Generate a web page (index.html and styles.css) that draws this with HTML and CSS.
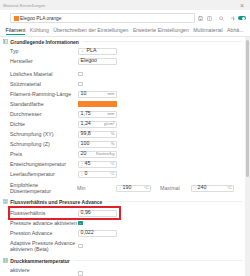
FILE: index.html
```html
<!DOCTYPE html>
<html lang="de">
<head>
    <meta charset="UTF-8">
    <meta name="viewport" content="width=device-width, initial-scale=1.0">
    <title>Material-Einstellungen</title>
    <link rel="stylesheet" href="styles.css">
</head>
<body>
    <div class="window">
        <div class="titlebar">
            <span class="title">Material-Einstellungen</span>
            <span class="close">×</span>
        </div>

        <div class="preset-bar">
            <div class="preset-select">
                <span class="swatch"></span>
                <span>Elegoo PLA orange</span>
            </div>
            <div class="preset-tools">
                <svg class="tool" viewBox="0 0 10 10"><rect x="1" y="1" width="8" height="8" rx="1" fill="none" stroke="#9a9a9a" stroke-width="1"/><rect x="3" y="1" width="4" height="3" fill="none" stroke="#9a9a9a" stroke-width="0.8"/><rect x="3" y="6" width="4" height="2" fill="#9a9a9a"/></svg>
                <svg class="tool" viewBox="0 0 10 10"><rect x="1" y="1" width="8" height="8" rx="1" fill="none" stroke="#9a9a9a" stroke-width="1"/><line x1="5" y1="1" x2="5" y2="9" stroke="#9a9a9a" stroke-width="0.8"/><line x1="2.5" y1="4" x2="4" y2="4" stroke="#9a9a9a" stroke-width="0.7"/><line x1="6" y1="6" x2="7.5" y2="6" stroke="#9a9a9a" stroke-width="0.7"/></svg>
                <svg class="tool search" viewBox="0 0 10 10"><circle cx="4.2" cy="4.2" r="2.9" fill="none" stroke="#8a8a8a" stroke-width="1"/><line x1="6.3" y1="6.3" x2="9" y2="9" stroke="#8a8a8a" stroke-width="1.1"/></svg>
                <svg class="tool branch" viewBox="0 0 10 10"><line x1="5" y1="1" x2="5" y2="9" stroke="#6fa89c" stroke-width="1.1"/><line x1="1.5" y1="4" x2="5" y2="4" stroke="#6fa89c" stroke-width="1.1"/><line x1="5" y1="6" x2="8.5" y2="6" stroke="#6fa89c" stroke-width="1.1"/><circle cx="1.8" cy="4" r="1" fill="#6fa89c"/></svg>
                <span class="toggle"><span class="knob"></span></span>
            </div>
        </div>

        <div class="tabs">
            <span class="tab active">Filament</span>
            <span class="tab">Kühlung</span>
            <span class="tab">Überschreiben der Einstellungen</span>
            <span class="tab">Erweiterte Einstellungen</span>
            <span class="tab">Multimaterial</span>
            <span class="tab">Abhä...</span>
        </div>

        <div class="content">
            <div class="page">
                <div class="section-head">
                    <svg class="sec-icon" viewBox="0 0 6 6"><rect x="0.4" y="0.4" width="5.2" height="5.2" fill="#dcefea" stroke="#86b9ae" stroke-width="0.7"/><rect x="1.4" y="1.4" width="1.2" height="3.2" fill="#86b9ae"/></svg>
                    <span>Grundlegende Informationen</span>
                </div>
                <div class="row">
                    <span class="label">Typ</span>
                    <span class="field">
                        <svg class="chevron" viewBox="0 0 6 4"><polyline points="1,1 3,3 5,1" fill="none" stroke="#999" stroke-width="0.8"/></svg>
                        <span class="value">PLA</span>
                    </span>
                </div>
                <div class="row">
                    <span class="label">Hersteller</span>
                    <span class="field"><span class="value">Elegoo</span></span>
                </div>
                <div class="row gap-top">
                    <span class="label">Lösliches Material</span>
                    <span class="check"></span>
                </div>
                <div class="row">
                    <span class="label">Stützmaterial</span>
                    <span class="check"></span>
                </div>
                <div class="row">
                    <span class="label">Filament-Ramming-Länge</span>
                    <span class="field"><span class="value">10</span><span class="unit">mm</span></span>
                </div>
                <div class="row">
                    <span class="label">Standardfarbe</span>
                    <span class="color-field"></span>
                </div>
                <div class="row">
                    <span class="label">Durchmesser</span>
                    <span class="field"><span class="value">1,75</span><span class="unit">mm</span></span>
                </div>
                <div class="row">
                    <span class="label">Dichte</span>
                    <span class="field"><span class="value">1,24</span><span class="unit">g/cm³</span></span>
                </div>
                <div class="row">
                    <span class="label">Schrumpfung (XY)</span>
                    <span class="field"><span class="value">99,8</span><span class="unit">%</span></span>
                </div>
                <div class="row">
                    <span class="label">Schrumpfung (Z)</span>
                    <span class="field"><span class="value">100</span><span class="unit">%</span></span>
                </div>
                <div class="row">
                    <span class="label">Preis</span>
                    <span class="field"><span class="value">20</span><span class="unit">Kosten/kg</span></span>
                </div>
                <div class="row">
                    <span class="label">Erweichungstemperatur</span>
                    <span class="field">
                        <svg class="spin" viewBox="0 0 4 8"><polyline points="0.8,3 2,1.8 3.2,3" fill="none" stroke="#aaa" stroke-width="0.6"/><polyline points="0.8,5 2,6.2 3.2,5" fill="none" stroke="#aaa" stroke-width="0.6"/></svg>
                        <span class="value">45</span><span class="unit">°C</span>
                    </span>
                </div>
                <div class="row">
                    <span class="label">Leerlauftemperatur</span>
                    <span class="field">
                        <svg class="spin" viewBox="0 0 4 8"><polyline points="0.8,3 2,1.8 3.2,3" fill="none" stroke="#aaa" stroke-width="0.6"/><polyline points="0.8,5 2,6.2 3.2,5" fill="none" stroke="#aaa" stroke-width="0.6"/></svg>
                        <span class="value">0</span><span class="unit">°C</span>
                    </span>
                </div>
                <div class="row two-line">
                    <span class="label">Empfohlene<br>Düsentemperatur</span>
                    <span class="range-label">Min</span>
                    <span class="field min">
                        <svg class="spin" viewBox="0 0 4 8"><polyline points="0.8,3 2,1.8 3.2,3" fill="none" stroke="#aaa" stroke-width="0.6"/><polyline points="0.8,5 2,6.2 3.2,5" fill="none" stroke="#aaa" stroke-width="0.6"/></svg>
                        <span class="value">190</span><span class="unit">°C</span>
                    </span>
                    <span class="range-label max-label">Maximal</span>
                    <span class="field max">
                        <svg class="spin" viewBox="0 0 4 8"><polyline points="0.8,3 2,1.8 3.2,3" fill="none" stroke="#aaa" stroke-width="0.6"/><polyline points="0.8,5 2,6.2 3.2,5" fill="none" stroke="#aaa" stroke-width="0.6"/></svg>
                        <span class="value">240</span><span class="unit">°C</span>
                    </span>
                </div>

                <div class="section-head">
                    <svg class="sec-icon" viewBox="0 0 6 6"><rect x="0.4" y="0.4" width="5.2" height="5.2" fill="#d6eef0" stroke="#8cc4c8" stroke-width="0.7"/><rect x="1.4" y="1.4" width="3.2" height="1.2" fill="#8cc4c8"/><rect x="1.4" y="3.4" width="3.2" height="1.2" fill="#8cc4c8"/></svg>
                    <span>Flussverhältnis und Pressure Advance</span>
                </div>
                <div class="row highlight">
                    <span class="label">Flussverhältnis</span>
                    <span class="field"><span class="value">0,96</span></span>
                </div>
                <div class="row">
                    <span class="label">Pressure advance aktivieren</span>
                    <span class="check on">
                        <svg viewBox="0 0 6 6"><polyline points="1.2,3 2.5,4.3 4.8,1.7" fill="none" stroke="#fff" stroke-width="0.9"/></svg>
                    </span>
                </div>
                <div class="row">
                    <span class="label">Pression Advance</span>
                    <span class="field"><span class="value">0,022</span></span>
                </div>
                <div class="row two-line short">
                    <span class="label">Adaptive Pressure Advance<br>aktivieren (Beta)</span>
                    <span class="check"></span>
                </div>

                <div class="section-head gap-top-small">
                    <svg class="sec-icon" viewBox="0 0 6 6"><rect x="0.4" y="0.4" width="5.2" height="5.2" fill="#dcefea" stroke="#86b9ae" stroke-width="0.7"/><rect x="1.4" y="1.4" width="1.2" height="3.2" fill="#86b9ae"/><rect x="3.4" y="1.4" width="1.2" height="3.2" fill="#86b9ae"/></svg>
                    <span>Druckkammertemperatur</span>
                </div>
                <div class="row last">
                    <span class="label">aktiviere</span>
                    <span class="check low"></span>
                </div>
            </div>
            <div class="scrollbar"><div class="thumb"></div></div>
        </div>
    </div>
</body>
</html>
```

FILE: styles.css
```css
html, body {
    margin: 0;
    padding: 0;
    height: 276px;
    overflow: hidden;
    background-color: #ffffff;
}
body {
    font-family: "Liberation Sans", Arial, sans-serif;
    color: #333333;
}
.window {
    width: 250px;
    height: 276px;
    display: flex;
    flex-direction: column;
}

/* title bar */
.titlebar {
    height: 10px;
    background-color: #f1f1f1;
    display: flex;
    align-items: center;
    justify-content: space-between;
    padding: 0 6px 0 3px;
    flex: none;
}
.title {
    font-size: 4.3px;
    color: #9c9c9c;
}
.close {
    font-size: 7px;
    line-height: 1;
    color: #8c8c8c;
}

/* preset row */
.preset-bar {
    height: 16px;
    display: flex;
    align-items: flex-start;
    padding: 3px 4px 0 10px;
    box-sizing: border-box;
    flex: none;
}
.preset-select {
    width: 185px;
    height: 10px;
    border: 1px solid #dedede;
    border-radius: 1px;
    box-sizing: border-box;
    display: flex;
    align-items: center;
    gap: 1.6px;
    padding-left: 2.5px;
    font-size: 4.8px;
    color: #333;
}
.swatch {
    width: 5px;
    height: 5px;
    background-color: #f5842a;
}
.preset-tools {
    display: flex;
    align-items: center;
    height: 10px;
    margin-left: 2.5px;
}
.tool {
    width: 5px;
    height: 5px;
    margin-right: 4px;
}
.tool.search {
    margin-left: 3px;
    margin-right: 7px;
}
.tool.branch {
    margin-right: 2.5px;
}
.toggle {
    width: 8px;
    height: 4.6px;
    border-radius: 3px;
    background-color: #0f9886;
    position: relative;
}
.knob {
    position: absolute;
    right: 0.8px;
    top: 0.8px;
    width: 3px;
    height: 3px;
    border-radius: 50%;
    background-color: #ffffff;
}

/* tabs */
.tabs {
    height: 11px;
    display: flex;
    gap: 4.4px;
    padding-left: 5.5px;
    border-bottom: 1px solid #e6e6e6;
    box-sizing: border-box;
    flex: none;
    white-space: nowrap;
    overflow: hidden;
}
.tab {
    font-size: 5.2px;
    line-height: 6px;
    padding-top: 1px;
    height: 7px;
    color: #7a7a7a;
    flex: none;
}
.tab.active {
    color: #222;
    border-bottom: 1px solid #0f9886;
    font-weight: 500;
}

/* content */
.content {
    flex: 1;
    display: flex;
    min-height: 0;
}
.page {
    flex: 1;
    overflow: hidden;
}
.scrollbar {
    width: 5px;
    background-color: #f0f0f0;
    flex: none;
}
.thumb {
    margin: 3px 1px 0 1px;
    height: 137px;
    border-radius: 2px;
    background-color: #c6c6c6;
}

.section-head {
    height: 9px;
    display: flex;
    align-items: center;
    padding-left: 2.5px;
    font-size: 5px;
    font-weight: bold;
    color: #303030;
    white-space: nowrap;
}
.section-head::after {
    content: "";
    flex: 1;
    height: 1px;
    background-color: #eeeeee;
    margin: 0 3px 0 4px;
}
.sec-icon {
    width: 5px;
    height: 5px;
    margin-right: 2.8px;
}
.gap-top-small {
    margin-top: 2px;
}

.row {
    height: 10px;
    display: flex;
    align-items: center;
    padding-left: 10px;
    font-size: 5.3px;
    white-space: nowrap;
}
.row.gap-top {
    margin-top: 3px;
}
.row.two-line {
    height: 18px;
}
.row.two-line.short {
    height: 16px;
}
.row.last {
    align-items: flex-start;
    padding-top: 2px;
}
.label {
    width: 68px;
    flex: none;
    color: #555555;
    line-height: 6px;
}
.field {
    width: 39px;
    height: 7px;
    border: 1px solid #dcdcdc;
    border-radius: 1px;
    box-sizing: border-box;
    display: flex;
    align-items: center;
    padding: 0 1.5px;
    flex: none;
    line-height: 1;
}
.value {
    color: #333;
}
.unit {
    margin-left: auto;
    font-size: 4.2px;
    color: #8a8a8a;
}
.chevron {
    width: 3.5px;
    height: 2.5px;
    margin-right: 2.5px;
}
.spin {
    width: 2.4px;
    height: 5px;
    margin-right: 1.6px;
}
.color-field {
    width: 39px;
    height: 6.5px;
    background-color: #f5842a;
    border-radius: 0.5px;
}
.check {
    width: 4.6px;
    height: 4.6px;
    border: 0.7px solid #c9c9c9;
    border-radius: 0.8px;
    box-sizing: border-box;
    background-color: #fff;
    display: flex;
    flex: none;
}
.check.on {
    background-color: #1a9a86;
    border-color: #1a9a86;
}
.check.on svg {
    width: 100%;
    height: 100%;
}
.check.low {
    margin-top: 4px;
}

.range-label {
    width: 39px;
    margin-left: -1px;
    color: #777;
    flex: none;
}
.max-label {
    width: 31px;
    margin-left: 9px;
}
.field.min {
    width: 35px;
}
.field.max {
    width: 43px;
}

.row.highlight {
    margin: 2px 0 0 10px;
    padding-left: 0;
    width: 109px;
    outline: 2px solid #e0212b;
}
```
